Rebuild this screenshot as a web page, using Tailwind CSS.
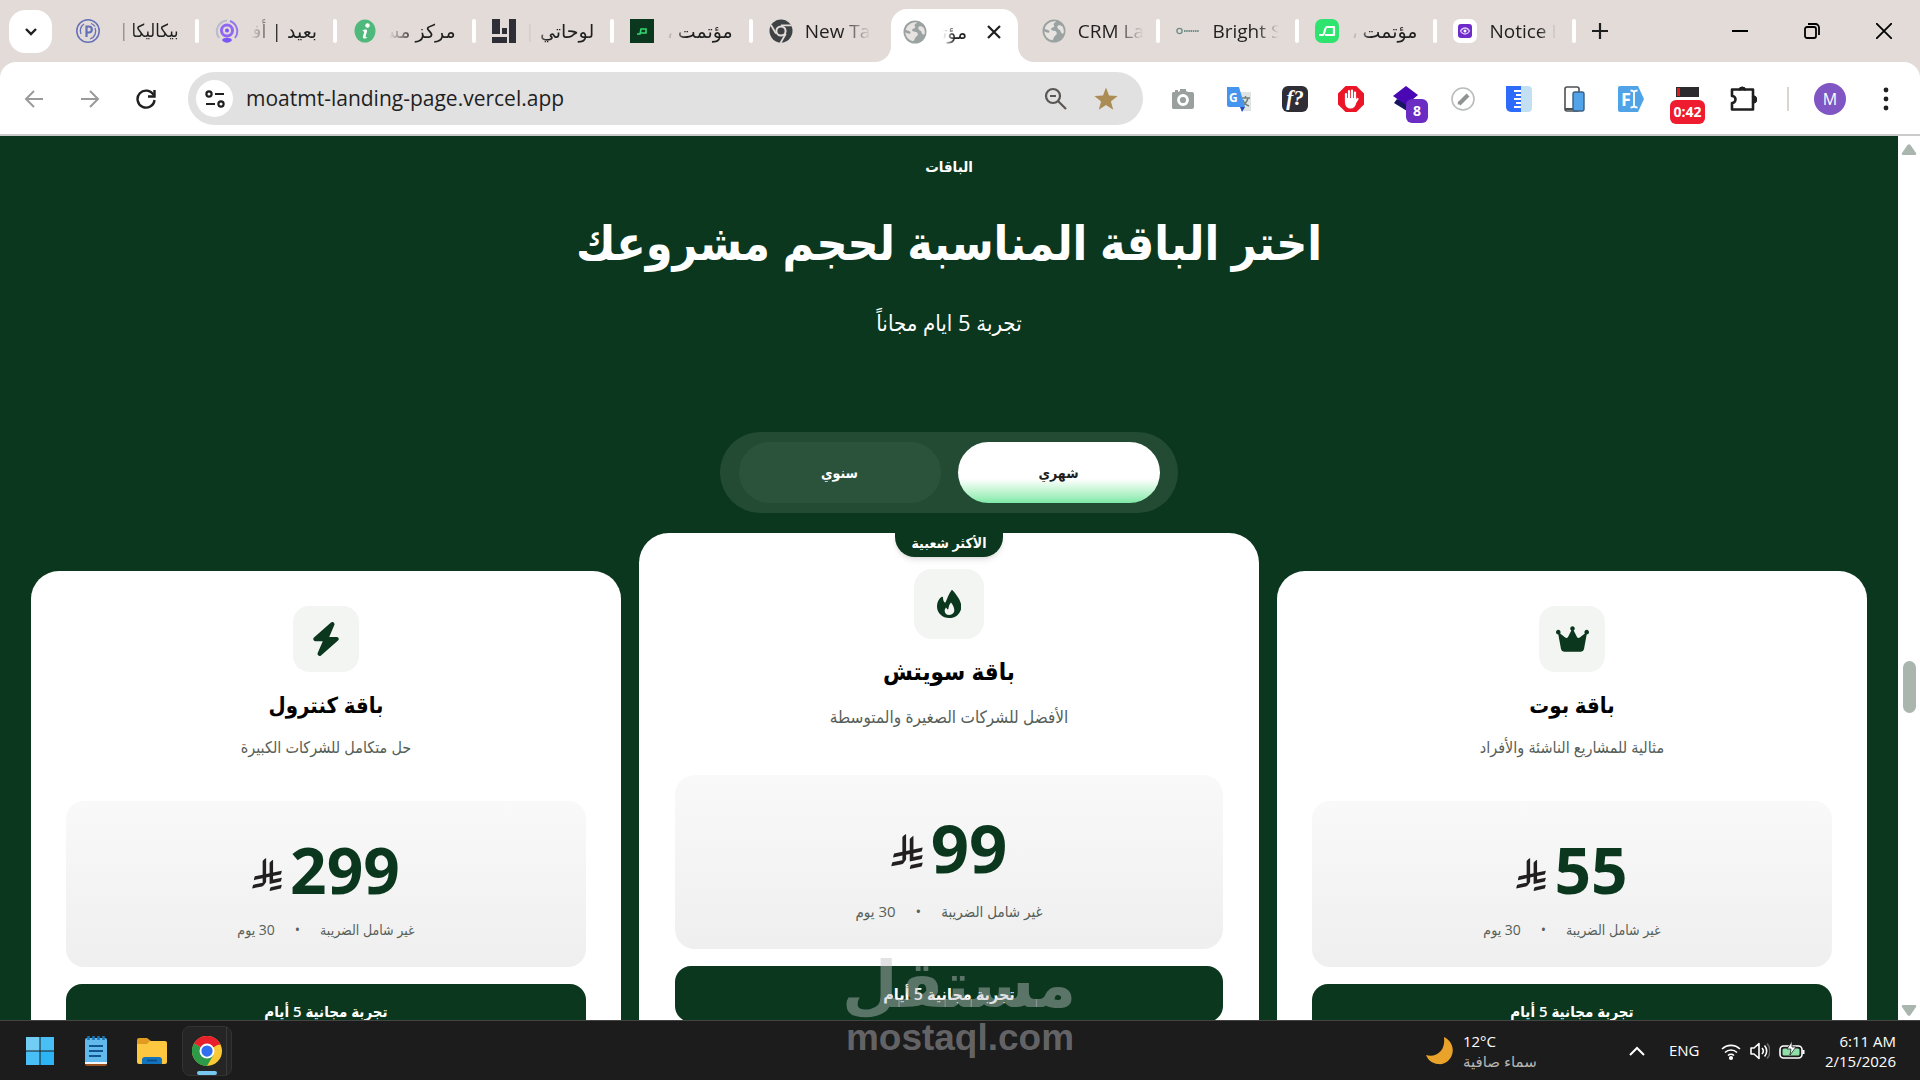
<!DOCTYPE html>
<html lang="ar">
<head>
  <meta charset="UTF-8">
  <meta name="viewport" content="width=device-width, initial-scale=1.0">
  <title>مؤتمت</title>
  <script src="https://cdn.jsdelivr.net/npm/@tailwindcss/browser@4"></script>
</head>
<body class="h-screen flex flex-col overflow-hidden bg-[#e3dbd8] font-['Open_Sans','Noto_Sans','DejaVu_Sans',sans-serif] text-[#1f1f1f]">

  <!-- Iconos compartidos -->
  <svg class="hidden">
    <symbol id="riyal" viewBox="0 0 1124 1257">
      <path d="M699.62,1113.02c-20.06,44.48-33.32,92.75-38.4,143.37l424.51-90.24c20.06-44.47,33.31-92.75,38.4-143.37l-424.51,90.24Z"/>
      <path d="M1085.73,895.8c20.06-44.47,33.32-92.75,38.4-143.37l-330.68,70.33v-135.2l292.27-62.11c20.06-44.47,33.32-92.75,38.4-143.37l-330.68,70.27V66.13c-50.67,28.45-95.67,66.32-132.25,110.99v403.35l-132.25,28.11V0c-50.67,28.44-95.67,66.32-132.25,110.99v525.69l-295.91,62.88c-20.06,44.47-33.33,92.75-38.42,143.37l334.33-71.05v170.26l-358.3,76.14c-20.06,44.47-33.32,92.75-38.4,143.37l375.04-79.7c30.53-6.35,56.77-24.4,73.83-49.24l68.78-101.97c7.14-10.55,11.3-23.27,11.3-36.97v-149.98l132.25-28.11v270.4l424.53-90.28Z"/>
    </symbol>
    <symbol id="globe" viewBox="0 0 24 24">
      <circle cx="12" cy="12" r="11.5" fill="#9aa3a2"/>
      <path d="M14 2.2c-.5 1.6-2 1.4-2.4 2.8-.3 1.2 1 1.2.6 2.4-.5 1.4-2.4.8-3 2.200-.4 1 .3 1.700 1.400 1.900 1.700.3 3.200.2 4 1.700.8 1.600-.6 3-1.800 3.800-1.200.9-.9 3.200-2.600 4.300C6 20.600 2.600 17 2.300 12.600c1.500.2 2.400 1.100 3.900 1.200 1.300.1 1.800-1 .9-2C6 10.600 3.700 11 2.700 9.600 3.800 5 8.600 1.600 14 2.200z" fill="#e6e3e1"/>
      <path d="M16 6.500c1.400-.8 3.500-.2 4.600 1.300 1.300 2.300 1.500 4.600.8 6.800-1.700.2-2.600-1-2.900-2.600-.2-1.300-1.700-1.200-2.500-2.300-.8-1.100-1.100-2.500 0-3.200z" fill="#e6e3e1"/>
    </symbol>
  </svg>

  <!-- Pestañas -->
  <header class="flex h-[62px] shrink-0 items-stretch text-[19px] leading-6">
    <button aria-label="Search tabs" class="ml-[9px] mt-[10px] flex size-[43px] items-center justify-center rounded-2xl bg-white">
      <svg class="size-4" viewBox="0 0 16 16" fill="none" stroke="#1f1f1f" stroke-width="2.400"><path d="M3 5l5 5 5-5"/></svg>
    </button>
    <nav class="ml-2 flex flex-1 items-center max-w-[1516px]">
      <a href="#" class="flex flex-1 min-w-0 items-center gap-4 px-4">
        <svg class="size-6 shrink-0" viewBox="0 0 24 24" fill="none" stroke="#6470b8"><circle cx="12" cy="12" r="11.200" stroke-width="1.500"/><path d="M5 15a8 8 0 0 1 3-10M19 9a8 8 0 0 1-5 11M15 4.500a8 8 0 0 1 4 3" stroke-width="1.300"/><path d="M10.500 18V7.500h2.300a3 3 0 0 1 0 6h-2" stroke-width="2.200"/></svg>
        <span dir="rtl" class="flex-1 overflow-hidden whitespace-nowrap font-['DejaVu_Sans_Condensed','DejaVu_Sans',sans-serif] text-lg [mask-image:linear-gradient(to_right,transparent,black_30%)]">بيكاليكا | متجر</span>
      </a>
      <i class="h-6 w-1 shrink-0 rounded-full bg-white"></i>
      <a href="#" class="flex flex-1 min-w-0 items-center gap-3 px-4">
        <svg class="size-6 shrink-0" viewBox="0 0 24 24" fill="none"><path d="M4 19A11 11 0 0 1 12 1.500" stroke="#b9bcc9" stroke-width="2"/><path d="M15 2a11 11 0 0 1 5 17" stroke="#9277ea" stroke-width="2"/><circle cx="12" cy="11.500" r="5.500" stroke="#9068f2" stroke-width="3"/><circle cx="12" cy="11.500" r="2" fill="#7b57f5"/><path d="M7 21c1-3 9-3 10 0-2 3.500-8 3.500-10 0z" fill="#7b57f5"/></svg>
        <span dir="rtl" class="flex-1 overflow-hidden whitespace-nowrap [mask-image:linear-gradient(to_right,transparent,black_40%)]">بعيد | أفضل</span>
      </a>
      <i class="h-6 w-1 shrink-0 rounded-full bg-white"></i>
      <a href="#" class="flex flex-1 min-w-0 items-center gap-3 px-4">
        <svg class="size-6 shrink-0" viewBox="0 0 24 24"><ellipse cx="12" cy="12" rx="10.500" ry="11.500" fill="#4fb97c"/><circle cx="14.500" cy="6.500" r="2.200" fill="#fff"/><path d="M9 12c3-2 5.500-2 5 .5l-1.500 5c0 1 1 .8 2 .4-1.500 2-5 2.500-4.600-.4l1.300-4.500c0-1-1-1-2.200-1z" fill="#fff"/></svg>
        <span dir="rtl" class="flex-1 overflow-hidden whitespace-nowrap [mask-image:linear-gradient(to_right,transparent,black_40%)]">مركز مساعدة</span>
      </a>
      <i class="h-6 w-1 shrink-0 rounded-full bg-white"></i>
      <a href="#" class="flex flex-1 min-w-0 items-center gap-3 px-4">
        <svg class="size-6 shrink-0" viewBox="0 0 24 24" fill="#2e2e36"><path d="M0 0h8v15H0zM17 0h7v24h-7zM10 9h5v6h-5zM0 18h15v6H0z"/></svg>
        <span dir="rtl" class="flex-1 overflow-hidden whitespace-nowrap [mask-image:linear-gradient(to_right,transparent,black_30%)]">لوحاتي | لوحة</span>
      </a>
      <i class="h-6 w-1 shrink-0 rounded-full bg-white"></i>
      <a href="#" class="flex flex-1 min-w-0 items-center gap-3 px-4">
        <svg class="size-6 shrink-0" viewBox="0 0 24 24"><path d="M0 0h24v24H0z" fill="#0a371d"/><path d="M7 15h3l1-5h5v4h-6" fill="none" stroke="#35d774" stroke-width="1.600"/></svg>
        <span dir="rtl" class="flex-1 overflow-hidden whitespace-nowrap [mask-image:linear-gradient(to_right,transparent,black_30%)]">مؤتمت ، أتمتة</span>
      </a>
      <i class="h-6 w-1 shrink-0 rounded-full bg-white"></i>
      <a href="#" class="flex flex-1 min-w-0 items-center gap-3 px-4">
        <svg class="size-6 shrink-0" viewBox="0 0 24 24"><circle cx="12" cy="12" r="11.500" fill="#3f4245"/><circle cx="12" cy="12" r="4.600" fill="none" stroke="#e3dbd8" stroke-width="2"/><path d="M12 6.400h10.500M7 14.600L2 6M16.800 14.800L11.500 24" stroke="#e3dbd8" stroke-width="1.800"/></svg>
        <span class="flex-1 overflow-hidden whitespace-nowrap [mask-image:linear-gradient(to_left,transparent,black_45%)]">New Tab</span>
      </a>
      <i class="h-6 w-1 shrink-0"></i>
      <a href="#" class="relative flex flex-1 min-w-0 items-center gap-4 self-end h-[53px] rounded-t-2xl bg-white px-3 pb-2">
        <svg class="absolute bottom-0 -left-4 size-4" viewBox="0 0 16 16" fill="#fff"><path d="M16 0v16H0A16 16 0 0 0 16 0z"/></svg>
        <svg class="absolute bottom-0 -right-4 size-4" viewBox="0 0 16 16" fill="#fff"><path d="M0 0v16h16A16 16 0 0 1 0 0z"/></svg>
        <svg class="size-6 shrink-0"><use href="#globe"/></svg>
        <span dir="rtl" class="w-6 overflow-hidden whitespace-nowrap [mask-image:linear-gradient(to_right,transparent,black_50%)]">مؤتمت</span>
        <svg class="ml-auto mr-1 size-4 shrink-0" viewBox="0 0 16 16" stroke="#1f1f1f" stroke-width="2.200"><path d="M2 2l12 12M14 2L2 14"/></svg>
      </a>
      <i class="h-6 w-1 shrink-0"></i>
      <a href="#" class="flex flex-1 min-w-0 items-center gap-3 pl-5 pr-3">
        <svg class="size-6 shrink-0"><use href="#globe"/></svg>
        <span class="flex-1 overflow-hidden whitespace-nowrap [mask-image:linear-gradient(to_left,transparent,black_45%)]">CRM Landing</span>
      </a>
      <i class="h-6 w-1 shrink-0 rounded-full bg-white"></i>
      <a href="#" class="flex flex-1 min-w-0 items-center gap-3 px-4">
        <svg class="size-6 shrink-0" viewBox="0 0 24 24"><circle cx="3.500" cy="12" r="2.600" fill="none" stroke="#6f8d86" stroke-width="1.400"/><path d="M8 12h15" stroke="#6f8d86" stroke-width="2" stroke-dasharray="1.500 .7"/></svg>
        <span class="flex-1 overflow-hidden whitespace-nowrap [mask-image:linear-gradient(to_left,transparent,black_35%)]">Bright Smile</span>
      </a>
      <i class="h-6 w-1 shrink-0 rounded-full bg-white"></i>
      <a href="#" class="flex flex-1 min-w-0 items-center gap-3 px-4">
        <svg class="size-6 shrink-0" viewBox="0 0 24 24"><rect width="24" height="24" rx="7" fill="#2fe36f"/><path d="M4 16h4c1.500 0 1.500-8 4-8h7v8h-9" fill="none" stroke="#fff" stroke-width="2.200" stroke-linejoin="round"/></svg>
        <span dir="rtl" class="flex-1 overflow-hidden whitespace-nowrap [mask-image:linear-gradient(to_right,transparent,black_30%)]">مؤتمت ، أتمتة</span>
      </a>
      <i class="h-6 w-1 shrink-0 rounded-full bg-white"></i>
      <a href="#" class="flex flex-1 min-w-0 items-center gap-3 px-4">
        <svg class="size-6 shrink-0" viewBox="0 0 24 24"><rect width="24" height="24" rx="7" fill="#fff"/><rect x="5" y="5" width="14" height="14" rx="3" fill="#6e2bc9"/><path d="M7.500 12c2.500-4 6.500-4 9 0-2.500 4-6.500 4-9 0z" fill="none" stroke="#d9c5f5" stroke-width="1.300"/><circle cx="12" cy="12" r="1.500" fill="#fff"/></svg>
        <span class="flex-1 overflow-hidden whitespace-nowrap [mask-image:linear-gradient(to_left,transparent,black_25%)]">Notice Log</span>
      </a>
      <i class="h-6 w-1 shrink-0 rounded-full bg-white"></i>
    </nav>
    <button aria-label="New tab" class="flex w-12 items-center justify-center">
      <svg class="size-4" viewBox="0 0 16 16" stroke="#1f1f1f" stroke-width="2.200"><path d="M8 0v16M0 8h16"/></svg>
    </button>
    <div class="ml-auto flex">
      <button aria-label="Minimize" class="flex w-[72px] items-center justify-center"><svg class="size-4" viewBox="0 0 16 16" stroke="#000" stroke-width="2"><path d="M0 8h16"/></svg></button>
      <button aria-label="Restore" class="flex w-[72px] items-center justify-center"><svg class="size-4" viewBox="0 0 16 16" fill="none" stroke="#000" stroke-width="1.800"><rect x="1" y="4" width="11" height="11" rx="2"/><path d="M4 1h7.500A3.500 3.500 0 0 1 15 4.500V12"/></svg></button>
      <button aria-label="Close" class="flex w-[72px] items-center justify-center"><svg class="size-4" viewBox="0 0 16 16" stroke="#000" stroke-width="1.800"><path d="M0 0l16 16M16 0L0 16"/></svg></button>
    </div>
  </header>

  <!-- Barra de direcciones -->
  <div class="flex h-[74px] shrink-0 items-center rounded-t-2xl border-b-2 border-[#cbcbcb] bg-white px-[6px] pt-px">
    <button aria-label="Back" class="flex w-14 justify-center"><svg class="size-5" viewBox="0 0 20 20" fill="none" stroke="#9a9a9a" stroke-width="2"><path d="M19 10H2M10 2l-8 8 8 8"/></svg></button>
    <button aria-label="Forward" class="flex w-14 justify-center"><svg class="size-5" viewBox="0 0 20 20" fill="none" stroke="#9a9a9a" stroke-width="2"><path d="M1 10h17M10 2l8 8-8 8"/></svg></button>
    <button aria-label="Reload" class="flex w-14 justify-center"><svg class="size-5" viewBox="0 0 20 20" fill="none" stroke="#1f1f1f" stroke-width="2.400"><path d="M17.500 6A8.500 8.500 0 1 0 18.500 11"/><path d="M18.500 1v6.500H12"/></svg></button>
    <div class="ml-[14px] mr-3 flex h-[53px] flex-1 items-center rounded-full bg-[#e1e1e1] pl-2 pr-3">
      <button aria-label="Site information" class="flex size-[37px] shrink-0 items-center justify-center rounded-full bg-white">
        <svg class="size-5" viewBox="0 0 20 20" fill="none" stroke="#1f1f1f" stroke-width="2.200"><circle cx="4" cy="5" r="2.600"/><path d="M10 5h9M1 15h9"/><circle cx="16" cy="15" r="2.600"/></svg>
      </button>
      <input type="text" aria-label="Address" value="moatmt-landing-page.vercel.app" class="ml-[13px] min-w-0 flex-1 bg-transparent text-[21px] outline-none">
      <button aria-label="Zoom" class="flex w-[50px] justify-center"><svg class="size-6" viewBox="0 0 24 24" fill="none" stroke="#5c5652" stroke-width="2.200"><circle cx="9" cy="9" r="7"/><path d="M6 9h6M14 14l8 8"/></svg></button>
      <button aria-label="Bookmark" class="flex w-[50px] justify-center"><svg class="size-6" viewBox="0 0 24 24" fill="#ab8c55"><path d="M12 .5l3 8.100 8.600.4-6.700 5.400 2.300 8.400L12 18l-7.200 4.800 2.300-8.400L.4 9l8.600-.4z"/></svg></button>
    </div>

    <button aria-label="Screenshot" class="flex w-14 justify-center"><svg class="size-6" viewBox="0 0 24 24"><path d="M2 5h2V3h3v2l2-1V2h6v2l2 1h4a2 2 0 0 1 2 2v13a2 2 0 0 1-2 2H2a2 2 0 0 1-1-2V7a2 2 0 0 1 1-2z" fill="#9aa09d"/><circle cx="12" cy="13" r="4.500" fill="none" stroke="#fff" stroke-width="2.800"/></svg></button>
    <button aria-label="Translate" class="flex w-14 justify-center"><svg class="size-7" viewBox="0 0 28 28"><path d="M11 7h15v19H17z" fill="#dfe3e3"/><path d="M16 13h9M20.500 11v2M23 13c-1 4-3 6-6 8M18 15c1 3 3 5 6 6" fill="none" stroke="#70807b" stroke-width="1.500"/><path d="M2 2h12l6 20H4a2 2 0 0 1-2-2z" fill="#4594ee"/><path d="M15 22h5l-3 5z" fill="#2449b8"/><text x="4" y="17" font-size="12" font-weight="700" fill="#fff">G</text></svg></button>
    <button aria-label="Font finder" class="flex w-14 justify-center"><span class="flex size-[26px] items-center justify-center rounded-md bg-[#2f2d35] font-['Liberation_Serif',serif] text-[21px] leading-none font-bold italic text-white">f?</span></button>
    <button aria-label="Ad blocker" class="flex w-14 justify-center"><svg class="size-[26px]" viewBox="0 0 26 26"><path d="M7.600 0h10.800L26 7.600v10.800L18.400 26H7.600L0 18.400V7.600z" fill="#ec1528"/><path d="M8 16.500V8M11 12V5M14 12V4.500M17 13V6.500M17 17l2.500-4" stroke="#fff" stroke-width="2.200" stroke-linecap="round"/><path d="M7 12h11v5a5.500 5.500 0 0 1-11 0z" fill="#fff"/></svg></button>
    <button aria-label="Layers" class="relative flex w-14 justify-center">
      <svg class="size-7" viewBox="0 0 28 28"><path d="M1 18l3-4 16 6-6 6z" fill="#171460"/><path d="M13 1l12 9-12 10L0 11z" fill="#4a08b4"/></svg>
      <b class="absolute left-[27px] top-[14px] flex h-6 w-[22px] items-center justify-center rounded-md bg-[#6b2cc4] text-sm leading-none text-white">8</b>
    </button>
    <button aria-label="Edit" class="flex w-14 justify-center"><svg class="size-6" viewBox="0 0 24 24"><circle cx="12" cy="12" r="11" fill="#fff" stroke="#b9bdbb" stroke-width="1.600"/><path d="M8 17l9-9" stroke="#8f9391" stroke-width="4"/><path d="M6.500 17.500l3.500-.5-2.500-2.500z" fill="#8f9391"/></svg></button>
    <button aria-label="Ruler" class="flex w-14 justify-center"><svg class="size-[26px]" viewBox="0 0 26 26"><path d="M14 0h8a4 4 0 0 1 4 4v18a4 4 0 0 1-4 4h-8z" fill="#c3e0f3"/><path d="M0 0h15v26H5a5 5 0 0 1-5-5z" fill="#2c6bfb"/><path d="M8 5h7M10 9h5M8 13h7M10 17h5M8 21h7" stroke="#fff" stroke-width="1.800"/></svg></button>
    <button aria-label="Devices" class="flex w-14 justify-center"><svg class="size-[26px]" viewBox="0 0 26 26"><rect x="3" y="1" width="14" height="24" rx="2" fill="#fff" stroke="#4b5054" stroke-width="1.600"/><path d="M3 23h14" stroke="#4b5054" stroke-width="2"/><rect x="11" y="6" width="11" height="19" rx="2" fill="#52a4ea" stroke="#3b5f80" stroke-width="1.400"/></svg></button>
    <button aria-label="Form filler" class="flex w-14 justify-center"><svg class="size-[26px]" viewBox="0 0 26 26"><path d="M2 0h18l6 13-6 13H2a2 2 0 0 1-2-2V2a2 2 0 0 1 2-2z" fill="#4fa3e6"/><text x="3" y="20" font-size="18" font-weight="700" fill="#fff">F</text><path d="M12.500 4.500c2 0 3 .5 3.500 1.500.5-1 1.500-1.500 3.500-1.500M12.500 21.500c2 0 3-.5 3.500-1.500.5 1 1.500 1.500 3.500 1.500M16 6v14" fill="none" stroke="#fff" stroke-width="1.800"/></svg></button>
    <button aria-label="Recorder" class="relative flex w-14 justify-center">
      <svg class="size-[26px]" viewBox="0 0 26 26"><path d="M2 1h23v10H2z" fill="#2c2a2c"/><path d="M3 2h3v8H3z" fill="#e21b1b"/></svg>
      <b class="absolute left-[11px] top-[14px] flex h-6 w-[35px] items-center justify-center rounded-md bg-[#ee1c2e] text-sm leading-none text-white">0:42</b>
    </button>
    <button aria-label="Extensions" class="flex w-14 justify-center"><svg class="size-7" viewBox="0 0 28 28" fill="none" stroke="#1f1f1f" stroke-width="2.600" stroke-linejoin="round"><path d="M3 4.500h7.500a3 3 0 0 1 5.500 0H24v7a3 3 0 0 1 0 6v7H3v-6.500a3.500 3.500 0 0 0 0-7z"/><path d="M11 4.500a2.500 2.500 0 0 1 4.600 0zM24 12a2.500 2.500 0 0 1 0 5z" fill="#1f1f1f"/></svg></button>
    <i class="ml-4 mr-[13px] h-6 w-[2px] bg-[#ddd3cf]"></i>
    <button class="flex w-14 justify-center"><span class="flex size-8 items-center justify-center rounded-full bg-[#8055c4] text-base text-white">M</span></button>
    <button aria-label="Menu" class="flex w-14 justify-center"><svg class="size-6" viewBox="0 0 24 24" fill="#1f1f1f"><circle cx="12" cy="3" r="2.400"/><circle cx="12" cy="12" r="2.400"/><circle cx="12" cy="21" r="2.400"/></svg></button>
  </div>

  <div class="flex min-h-0 flex-1">
    <!-- Sección de paquetes -->
    <main dir="rtl" class="min-w-0 flex-1 overflow-hidden bg-[#0a371d] px-[31px] text-center font-['Open_Sans','Noto_Sans','DejaVu_Sans_Condensed','DejaVu_Sans',sans-serif] text-white">
      <p class="pt-[18px] text-[15px] leading-6 font-semibold">الباقات</p>
      <h1 class="mt-7 text-[48px] leading-[72px] font-bold">اختر الباقة المناسبة لحجم مشروعك</h1>
      <p class="mt-7 text-[22px] leading-8">تجربة 5 ايام مجاناً</p>

      <div class="mx-auto mt-[94px] flex h-[81px] w-[458px] items-center justify-center gap-[17px] rounded-full bg-white/10 text-sm font-bold">
        <button class="h-[61px] w-[202px] rounded-full bg-linear-to-b from-white from-60% to-[#7ee9a8] text-[#1f1f1f]">شهري</button>
        <button class="h-[61px] w-[202px] rounded-full bg-white/4">سنوي</button>
      </div>

      <div class="mt-5 grid grid-cols-[590fr_620fr_590fr] items-start gap-[18px] text-black">
        <!-- باقة بوت -->
        <article class="mt-[38px] flex flex-col items-center rounded-[28px] bg-white px-[35px] pt-[35px] pb-32">
          <div class="flex size-[66px] items-center justify-center rounded-2xl bg-[#f3f5f3]">
            <svg class="h-8 w-[33px]" viewBox="0 0 576 512" fill="#0a371d"><path d="M309 106c11.400-7 19-19.700 19-34c0-22.100-17.900-40-40-40s-40 17.900-40 40c0 14.400 7.600 27 19 34L209.700 220.600c-9.100 18.200-32.700 23.400-48.600 10.700L72 160c5-6.700 8-15 8-24c0-22.100-17.900-40-40-40S0 113.900 0 136s17.900 40 40 40c.2 0 .5 0 .7 0L86.400 427.400c5.500 30.400 32 52.600 63 52.600H426.600c30.900 0 57.400-22.100 63-52.600L535.300 176c.2 0 .5 0 .7 0c22.100 0 40-17.900 40-40s-17.900-40-40-40s-40 17.900-40 40c0 9 3 17.300 8 24l-89.100 71.300c-15.900 12.700-39.500 7.500-48.600-10.700L309 106z"/></svg>
          </div>
          <h2 class="mt-3 text-[22px] leading-10 font-semibold">باقة بوت</h2>
          <p class="mt-[11px] text-base leading-6 text-[#566059]">مثالية للمشاريع الناشئة والأفراد</p>
          <div class="mt-[42px] flex h-[166px] w-full flex-col items-center rounded-[18px] bg-linear-to-b from-[#f8f9f8] to-[#efefef] pt-[37px]">
            <div class="flex h-16 items-center gap-2">
              <b class="text-[64px] leading-none text-[#0a371d]">55</b>
              <svg class="mt-2 h-[33px] w-[30px]" fill="#231f20"><use href="#riyal"/></svg>
            </div>
            <div class="mt-4 flex items-center gap-5 text-sm leading-6 text-[#566059]"><span>غير شامل الضريبة</span><span>•</span><span>30 يوم</span></div>
          </div>
          <button class="mt-[17px] h-[54px] w-full rounded-2xl bg-[#0a371d] text-[15px] font-semibold text-white">تجربة مجانية 5 أيام</button>
        </article>

        <!-- باقة سويتش -->
        <article class="relative flex flex-col items-center rounded-[30px] bg-white px-9 pt-9 pb-40">
          <span class="absolute top-0 rounded-b-[20px] bg-[#0a371d] px-4 pb-1 text-sm leading-5 font-bold text-white shadow-md">الأكثر شعبية</span>
          <div class="flex size-[70px] items-center justify-center rounded-[18px] bg-[#f3f5f3]">
            <svg class="h-7 w-6" viewBox="0 0 24 28" fill="#0a371d" fill-rule="evenodd"><path d="M15.500.2C19 4 24.300 10.500 24.300 16.500 24.300 23 19 28 12.200 28S-.2 23 0 16C.1 12 2 8.500 4.800 6.800c.7-.4 1.200 0 1.200.7.1 2.300.5 4.500 2.300 5.300C10.500 8 11.500 4 14.500.2c.3-.3.700-.3 1 0zM14 12.500c-1.500 1.500-2.300 4-2.600 6.300-.1.700-.8.800-1.200.3L9 17.500c-3 4-.5 7.500 3.300 7.500 3.200 0 5.200-2.300 5-5-.2-2.700-1.500-5.300-3.300-7.500z"/></svg>
          </div>
          <h2 class="mt-3 text-2xl leading-10 font-semibold">باقة سويتش</h2>
          <p class="mt-[14px] text-[17px] leading-6 text-[#566059]">الأفضل للشركات الصغيرة والمتوسطة</p>
          <div class="mt-[46px] flex h-[174px] w-full flex-col items-center rounded-[20px] bg-linear-to-b from-[#f8f9f8] to-[#efefef] pt-10">
            <div class="flex h-16 items-center gap-2">
              <b class="text-[67px] leading-none text-[#0a371d]">99</b>
              <svg class="mt-2 h-[35px] w-8" fill="#231f20"><use href="#riyal"/></svg>
            </div>
            <div class="mt-5 flex items-center gap-5 text-[15px] leading-6 text-[#566059]"><span>غير شامل الضريبة</span><span>•</span><span>30 يوم</span></div>
          </div>
          <button class="mt-[17px] h-14 w-full rounded-2xl bg-[#0a371d] text-base font-semibold text-white">تجربة مجانية 5 أيام</button>
        </article>

        <!-- باقة كنترول -->
        <article class="mt-[38px] flex flex-col items-center rounded-[28px] bg-white px-[35px] pt-[35px] pb-32">
          <div class="flex size-[66px] items-center justify-center rounded-2xl bg-[#f3f5f3]">
            <svg class="h-[34px] w-[30px]" viewBox="0 0 448 512" fill="#0a371d"><path d="M349.400 44.600c5.900-13.700 1.500-29.700-10.600-38.500s-28.600-8-39.900 1.800l-256 224c-10 8.800-13.600 22.900-8.900 35.300S50.700 288 64 288H175.500L98.600 467.400c-5.900 13.700-1.500 29.700 10.600 38.500s28.600 8 39.900-1.800l256-224c10-8.800 13.600-22.900 8.900-35.300s-16.600-20.700-30-20.700H272.500L349.400 44.600z"/></svg>
          </div>
          <h2 class="mt-3 text-[22px] leading-10 font-semibold">باقة كنترول</h2>
          <p class="mt-[11px] text-base leading-6 text-[#566059]">حل متكامل للشركات الكبيرة</p>
          <div class="mt-[42px] flex h-[166px] w-full flex-col items-center rounded-[18px] bg-linear-to-b from-[#f8f9f8] to-[#efefef] pt-[37px]">
            <div class="flex h-16 items-center gap-2">
              <b class="text-[64px] leading-none text-[#0a371d]">299</b>
              <svg class="mt-2 h-[33px] w-[30px]" fill="#231f20"><use href="#riyal"/></svg>
            </div>
            <div class="mt-4 flex items-center gap-5 text-sm leading-6 text-[#566059]"><span>غير شامل الضريبة</span><span>•</span><span>30 يوم</span></div>
          </div>
          <button class="mt-[17px] h-[54px] w-full rounded-2xl bg-[#0a371d] text-[15px] font-semibold text-white">تجربة مجانية 5 أيام</button>
        </article>
      </div>
    </main>

    <!-- Barra de desplazamiento -->
    <div class="flex w-[22px] flex-col items-center bg-white py-1">
      <svg class="mt-1 h-3 w-4" viewBox="0 0 16 12" fill="#aab5ae"><path d="M6.500 1a2 2 0 0 1 3 0L15 9c.6 1 0 2-1.500 2h-11C1 11 .4 10 1 9z"/></svg>
      <i class="mt-[505px] h-[52px] w-[13px] rounded-full bg-[#aab5ae]"></i>
      <svg class="mt-auto h-3 w-4" viewBox="0 0 16 12" fill="#aab5ae"><path d="M6.500 11a2 2 0 0 0 3 0L15 3c.6-1 0-2-1.500-2h-11C1 1 .4 2 1 3z"/></svg>
    </div>
  </div>

  <!-- Barra de tareas -->
  <footer class="flex h-[60px] shrink-0 items-center border-t border-[#444] bg-[#1c1c1c] pl-3 text-white">
    <button aria-label="Start" class="flex w-14 justify-center"><svg class="size-[30px]" viewBox="0 0 30 30"><path d="M1 1h13.500v13.500H1z" fill="#72cdf4"/><path d="M15.500 1H29v13.500H15.500zM1 15.500h13.500V29H1z" fill="#48bff5"/><path d="M15.500 15.500H29V29H15.500z" fill="#2db4f5"/></svg></button>
    <button aria-label="Notepad" class="flex w-14 justify-center"><svg class="size-[30px]" viewBox="0 0 30 30"><path d="M4 26h22v2a2 2 0 0 1-2 2H6a2 2 0 0 1-2-2z" fill="#9a4f1e"/><path d="M4 25h22v3H4z" fill="#f5f5f5"/><path d="M4 4a2 2 0 0 1 2-2h18a2 2 0 0 1 2 2v22H4z" fill="#62b9ec"/><path d="M8 10h14M8 15h14M8 20h12" stroke="#11568f" stroke-width="2"/><path d="M7.500 0v4M12.500 0v4M17.500 0v4M22.500 0v4" stroke="#1b74b5" stroke-width="2.600"/></svg></button>
    <button aria-label="File Explorer" class="flex w-14 justify-center"><svg class="size-8" viewBox="0 0 32 32"><path d="M1 5a2 2 0 0 1 2-2h8l4 3h14v6H1z" fill="#e09b20"/><path d="M1 9h10l3-3h15a2 2 0 0 1 2 2v19a2 2 0 0 1-2 2H3a2 2 0 0 1-2-2z" fill="#fdc83f"/><path d="M6 29v-4a3 3 0 0 1 3-3h14a3 3 0 0 1 3 3v4z" fill="#1273bd"/><path d="M11 25.500h10" stroke="#0b4b85" stroke-width="1.600"/></svg></button>
    <button aria-label="Google Chrome" class="relative ml-[2px] flex h-[50px] w-[50px] items-center justify-center rounded-lg border border-[#333] bg-[#252525]">
      <i class="absolute top-0 right-1 h-12 w-px bg-[#3a3a3a]"></i>
      <svg class="mr-px size-[30px]" viewBox="0 0 48 48"><circle cx="24" cy="24" r="24" fill="#fcc936"/><path d="M24 24L3.200 12a24 24 0 0 1 41.600 0z" fill="#e8202c"/><path d="M13 12h32v2H24z" fill="#e8202c"/><path d="M3.200 12a24 24 0 0 0 20.800 36l10.400-18L24 24z" fill="#2c9a48"/><circle cx="24" cy="24" r="12" fill="#fff"/><circle cx="24" cy="24" r="9" fill="#2f6ff0"/></svg>
      <i class="absolute bottom-0 left-[14px] h-1 w-5 rounded-full bg-[#76c8ee]"></i>
    </button>

    <button class="ml-auto flex items-center gap-2 text-left text-[15px] leading-5">
      <svg class="size-[30px]" viewBox="0 0 30 30"><path d="M19 1c6 3 10 9 8.500 16C26 24 20 29 13 28 7 27.500 3 24 1 19c9 3 20-3 18-18z" fill="#e9a32a"/></svg>
      <span class="flex w-[76px] flex-col whitespace-nowrap"><span>12°C</span><span class="text-[15px] leading-5 text-[#b5b5b5]">سماء صافية</span></span>
    </button>
    <button aria-label="Show hidden icons" class="ml-[90px] flex w-6"><svg class="size-4" viewBox="0 0 16 16" fill="none" stroke="#fff" stroke-width="2"><path d="M1 12l7-7 7 7"/></svg></button>
    <button class="ml-4 w-[30px] text-[15px]">ENG</button>
    <div class="ml-[22px] flex items-center gap-[9px]">
      <svg class="size-5" viewBox="0 0 20 20" fill="none" stroke="#fff" stroke-width="1.600"><path d="M1 8a13 13 0 0 1 18 0M4 11.500a8.500 8.500 0 0 1 12 0M7 14.500a4.300 4.300 0 0 1 6 0"/><circle cx="10" cy="17" r="1.300" fill="#fff"/></svg>
      <svg class="size-5" viewBox="0 0 20 20" fill="none" stroke="#fff" stroke-width="1.600"><path d="M1 7h3l5-4.500v15L4 13H1z" stroke-linejoin="round"/><path d="M12 7a4.500 4.500 0 0 1 0 6M14.500 4.500a8 8 0 0 1 0 11"/><path d="M17 2.500a11 11 0 0 1 0 15" stroke="#666"/></svg>
      <svg class="h-5 w-[26px]" viewBox="0 0 26 20"><rect x="1" y="5" width="22" height="12" rx="3.500" fill="none" stroke="#fff" stroke-width="1.600"/><rect x="3.500" y="7.500" width="17" height="7" rx="1.500" fill="#8fe0a8"/><path d="M24.500 9v4" stroke="#fff" stroke-width="2"/><path d="M13 0L8 8h4l-1 6 6-8h-4z" fill="#fff" stroke="#1c1c1c" stroke-width=".8"/></svg>
    </div>
    <time class="mr-6 ml-5 text-right text-[15px] leading-5">6:11 AM<br>2/15/2026</time>
  </footer>

  <!-- Marca de agua -->
  <div aria-hidden="true" class="pointer-events-none absolute bottom-[22px] left-[844px] w-[232px] text-center text-[#bfbfc6]/45">
    <p dir="rtl" class="text-[64px] leading-[70px] font-bold">مستقل</p>
    <p class="font-['Liberation_Sans',sans-serif] text-[37px] leading-10 font-bold">mostaql.com</p>
  </div>
</body>
</html>
